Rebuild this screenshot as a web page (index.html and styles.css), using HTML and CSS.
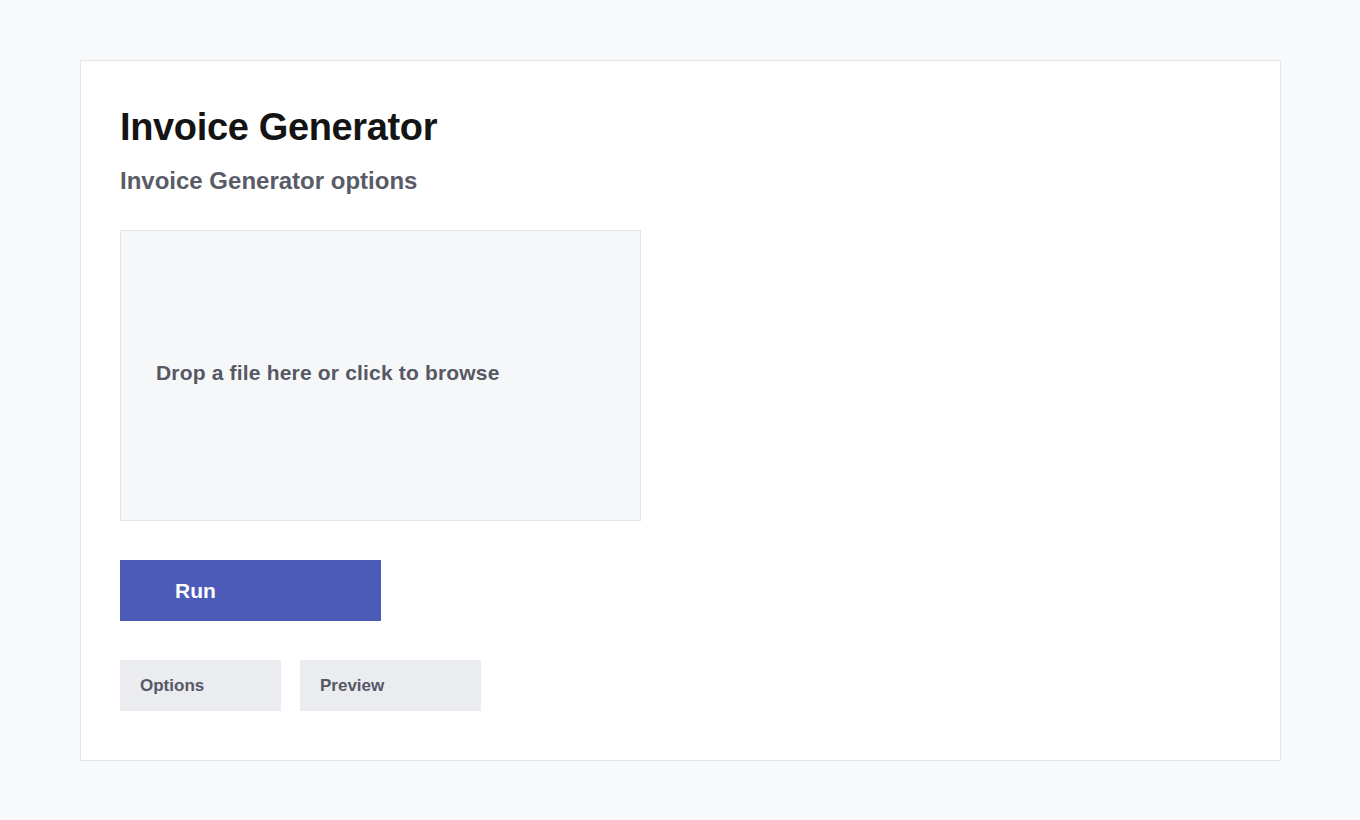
FILE: index.html
```html
<!DOCTYPE html>
<html lang="en">
<head>
<meta charset="utf-8">
<title>Invoice Generator</title>
<link rel="stylesheet" href="styles.css">
</head>
<body>
<main class="card">
  <h1 class="title">Invoice Generator</h1>
  <h2 class="subtitle">Invoice Generator options</h2>
  <div class="dropzone">Drop a file here or click to browse</div>
  <button class="run">Run</button>
  <div class="tabs">
    <button class="tab tab-options">Options</button>
    <button class="tab tab-preview">Preview</button>
  </div>
</main>
</body>
</html>
```
FILE: styles.css
```css
html, body {
  margin: 0;
  padding: 0;
}
body {
  background: #f8f9fa;
  font-family: "Liberation Sans", Arial, sans-serif;
  padding: 60px 80px;
}
.card {
  box-sizing: border-box;
  width: 1201px;
  height: 701px;
  background: #ffffff;
  border: 1px solid #e3e5e8;
  padding: 39px 39px;
  display: flex;
  flex-direction: column;
  align-items: flex-start;
}
.title {
  margin: 0;
  font-size: 38px;
  letter-spacing: -0.35px;
  line-height: 54px;
  font-weight: 700;
  color: #141414;
}
.subtitle {
  margin: 12px 0 0;
  font-size: 24px;
  line-height: 30px;
  font-weight: 700;
  color: #595b67;
}
.dropzone {
  box-sizing: border-box;
  margin-top: 34px;
  width: 521px;
  height: 291px;
  background: #f6f7f8;
  border: 1px solid #e3e5e8;
  display: flex;
  align-items: center;
  padding: 0 0 5px 35px;
  font-size: 21px;
  letter-spacing: 0.18px;
  font-weight: 700;
  color: #565865;
}
.run {
  margin-top: 39px;
  width: 261px;
  height: 61px;
  border: none;
  background: #4c5bb8;
  color: #ffffff;
  font-family: inherit;
  font-size: 21px;
  font-weight: 700;
  text-align: left;
  padding: 0 0 0 55px;
}
.tabs {
  margin-top: 39px;
  display: flex;
  gap: 19px;
}
.tab {
  height: 51px;
  border: none;
  background: #ebecf0;
  color: #565865;
  font-family: inherit;
  font-size: 17px;
  font-weight: 700;
  text-align: left;
  padding: 1px 0 0 20px;
}
.tab-options { width: 161px; }
.tab-preview { width: 181px; }
```
